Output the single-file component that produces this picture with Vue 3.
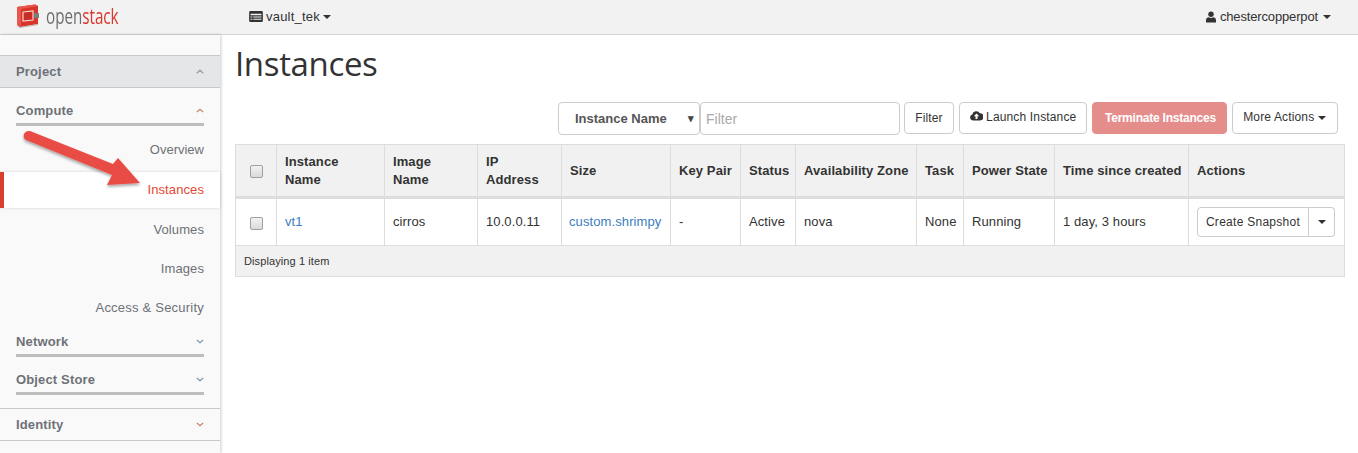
<script setup>
const headers = [
  { label: 'Instance Name', w: 108 },
  { label: 'Image Name', w: 93 },
  { label: 'IP Address', w: 84 },
  { label: 'Size', w: 109, one: true },
  { label: 'Key Pair', w: 70, one: true },
  { label: 'Status', w: 55, one: true },
  { label: 'Availability Zone', w: 121, one: true },
  { label: 'Task', w: 47, one: true },
  { label: 'Power State', w: 91, one: true },
  { label: 'Time since created', w: 134, one: true },
  { label: 'Actions', w: 156, one: true }
]
const cells = ['cirros', '10.0.0.11']
const tail = ['-', 'Active', 'nova', 'None', 'Running', '1 day, 3 hours']
</script>

<template>
  <div class="page">
    <header class="topbar">
      <div class="brand">
        <svg class="logo" width="26" height="24" viewBox="0 0 26 24">
          <path d="M2 3 L20 0.500 L23 2 L23 20 L5 23 L2 21 Z" fill="#d8342a" />
          <path d="M2 3 L20 0.500 L23 2 L6 5 L6 22 L2 21 Z" fill="#e8574c" />
          <path d="M8 8 L18 7 L18 16 L8 17 Z" fill="#c92e25" stroke="#f3d6d2" stroke-width="1.200" />
          <path d="M19 9 H24 V14 H19 Z" fill="#7d7d7d" />
          <path d="M1 22 L5 23 L23 20 L23 21 L5 24 Z" fill="#b9b2ae" />
        </svg>
        <span class="wordmark"><span class="open">open</span><span class="stack">stack</span></span>
      </div>
      <div class="project-pick">
        <svg width="14" height="11" viewBox="0 0 15 12"><path fill="#333" d="M0 1.500A1.500 1.500 0 0 1 1.500 0h12A1.500 1.500 0 0 1 15 1.500v9a1.500 1.500 0 0 1-1.500 1.500h-12A1.500 1.500 0 0 1 0 10.500zM1.500 3v1.500h12V3zm0 3v1h2V6zm3 0v1h9V6zm-3 2.500v1h2v-1zm3 0v1h9v-1z" fill-rule="evenodd"/></svg>
        <span class="pick-name">vault_tek</span>
        <i class="caret"></i>
      </div>
      <div class="user">
        <svg width="10" height="12" viewBox="0 0 11 12"><circle cx="5.500" cy="3" r="3" fill="#333"/><path fill="#333" d="M0 12V9.500C0 7.500 1.500 6.500 3 6.300c1.500 1 3.500 1 5 0 1.500.2 3 1.200 3 3.200V12z"/></svg>
        <span class="user-name">chestercopperpot</span>
        <i class="caret"></i>
      </div>
    </header>

    <div class="body">
      <aside class="sidebar">
        <div class="dash dash-active">
          <span>Project</span>
          <svg class="chev" viewBox="0 0 10 6"><path d="M1 5 L5 1.500 L9 5" /></svg>
        </div>
        <div class="group open-group">
          <span>Compute</span>
          <svg class="chev orange" viewBox="0 0 10 6"><path d="M1 5 L5 1.500 L9 5" /></svg>
        </div>
        <nav class="links">
          <a class="link l-overview">Overview</a>
          <a class="link active">Instances</a>
          <a class="link l-volumes">Volumes</a>
          <a class="link l-images">Images</a>
          <a class="link l-access">Access &amp; Security</a>
        </nav>
        <div class="group g-network">
          <span>Network</span>
          <svg class="chev blue" viewBox="0 0 10 6"><path d="M1 1 L5 4.500 L9 1" /></svg>
        </div>
        <div class="group g-store">
          <span>Object Store</span>
          <svg class="chev blue" viewBox="0 0 10 6"><path d="M1 1 L5 4.500 L9 1" /></svg>
        </div>
        <div class="dash dash-identity">
          <span>Identity</span>
          <svg class="chev orange" viewBox="0 0 10 6"><path d="M1 1 L5 4.500 L9 1" /></svg>
        </div>
      </aside>

      <main class="main">
        <h1 class="title">Instances</h1>
        <div class="actions">
          <div class="select">
            <span>Instance Name</span>
            <span class="tri">▾</span>
          </div>
          <input class="filter" placeholder="Filter" />
          <button class="btn b-filter">Filter</button>
          <button class="btn b-launch">
            <svg width="13" height="11" viewBox="0 0 13 11"><path fill="#333" fill-rule="evenodd" d="M3 10.500A3 3 0 0 1 2.300 4.600 4 4 0 0 1 9.800 3.300 3.600 3.600 0 0 1 10 10.500zM6.500 3.500 3.800 6.300H5.500V9h2V6.300h1.700z"/></svg>
            Launch Instance
          </button>
          <button class="btn danger">Terminate Instances</button>
          <button class="btn b-more">More Actions <i class="caret"></i></button>
        </div>

        <table class="table">
          <colgroup>
            <col style="width: 41px" />
            <col v-for="h in headers" :key="h.label" :style="{ width: h.w + 'px' }" />
          </colgroup>
          <thead>
            <tr>
              <th class="check"><span class="box"></span></th>
              <th v-for="h in headers" :key="h.label" :class="{ one: h.one }">{{ h.label }}</th>
            </tr>
          </thead>
          <tbody>
            <tr>
              <td class="check"><span class="box"></span></td>
              <td><a class="tlink">vt1</a></td>
              <td v-for="c in cells" :key="c">{{ c }}</td>
              <td><a class="tlink size-link">custom.shrimpy</a></td>
              <td v-for="c in tail" :key="c">{{ c }}</td>
              <td>
                <div class="split">
                  <span class="split-main">Create Snapshot</span>
                  <span class="split-caret"><i class="caret"></i></span>
                </div>
              </td>
            </tr>
          </tbody>
          <tfoot>
            <tr><td colspan="12">Displaying 1 item</td></tr>
          </tfoot>
        </table>
      </main>
    </div>

    <svg class="arrow" width="130" height="80" viewBox="0 0 130 80">
      <defs>
        <filter id="sh" x="-20%" y="-20%" width="140%" height="150%">
          <feDropShadow dx="0" dy="2" stdDeviation="1.500" flood-color="#000" flood-opacity="0.35" />
        </filter>
      </defs>
      <path filter="url(#sh)" fill="#e94c45" d="M8 2 L91 35 L96 29 L118 54 L85 56 L90 46 L4 11 C0 9 1 1 8 2 Z" />
    </svg>
  </div>
</template>

<style>
html, body { margin: 0; background: #fff; }
</style>

<style scoped>
.page {
  position: relative;
  width: 1358px;
  height: 453px;
  overflow: hidden;
  font-family: "Liberation Sans", Arial, sans-serif;
  font-size: 13px;
  color: #333;
  letter-spacing: 0.1px;
}
.topbar {
  height: 34px;
  background: #f2f2f2;
  border-bottom: 1px solid #d6d6d6;
  display: flex;
  align-items: center;
}
.brand { width: 249px; display: flex; align-items: center; padding-left: 15px; box-sizing: border-box; gap: 5px; }
.logo { flex: none; margin-top: -2px; }
.wordmark {
  font-family: "Open Sans", sans-serif;
  font-size: 22px;
  font-weight: 500;
  letter-spacing: 0;
  transform: scaleX(0.69);
  transform-origin: left center;
  line-height: 28px;
  margin-top: -5px;
}
.open { color: #6d6d6d; }
.stack { color: #d9372c; }
.project-pick { display: flex; align-items: center; gap: 3px; margin-top: -1px; }
.pick-name { letter-spacing: 0.2px; }
.user { margin-left: auto; margin-right: 27px; display: flex; align-items: center; gap: 4px; margin-top: -1px; }
.user-name { letter-spacing: -0.15px; }
.user .caret { margin-left: 1px; }
.caret {
  display: inline-block;
  width: 0;
  height: 0;
  border-top: 4px solid #333;
  border-left: 4px solid transparent;
  border-right: 4px solid transparent;
  vertical-align: middle;
}
.body { display: flex; height: 418px; }
.sidebar {
  width: 220px;
  flex: none;
  background: #f9f9f9;
  box-shadow: 1px 0 3px rgba(0, 0, 0, 0.2);
  padding-top: 20px;
  box-sizing: border-box;
  color: #6e7177;
  position: relative;
  letter-spacing: 0.15px;
}
.dash {
  height: 33px;
  padding: 0 16px;
  display: flex;
  align-items: center;
  justify-content: space-between;
  font-weight: 700;
  box-sizing: border-box;
  border-top: 1px solid #c8c8c8;
  border-bottom: 1px solid #c8c8c8;
}
.dash-active { background: #e4e6e8; }
.dash-identity { margin-top: 13px; }
.group {
  margin: 0 16px;
  display: flex;
  align-items: center;
  justify-content: space-between;
  font-weight: 700;
  box-sizing: border-box;
  border-bottom: 3px solid #bdbdbd;
}
.open-group { height: 38px; padding-top: 9px; }
.g-network { height: 31px; padding-top: 2px; }
.g-store { height: 38px; padding-top: 9px; }
.chev { width: 8px; height: 5px; fill: none; stroke: #7f8c99; stroke-width: 1.300; }
.chev.orange { stroke: #c0785a; }
.chev.blue { stroke: #6e8ba5; }
.links { display: flex; flex-direction: column; }
.link {
  height: 39px;
  line-height: 41px;
  text-align: right;
  padding-right: 16px;
  color: #6e7177;
  letter-spacing: 0.1px;
}
.l-overview { height: 46px; line-height: 48px; letter-spacing: 0; }
.link.active {
  height: 36px;
  line-height: 35px;
  background: #fff;
  color: #e4492f;
  border-left: 4px solid #d9402a;
  box-shadow: 0 0 3px rgba(0, 0, 0, 0.15);
  width: 220px;
  box-sizing: border-box;
  position: relative;
}
.l-volumes { height: 42px; line-height: 44px; }
.l-images { height: 37px; line-height: 37px; }
.l-access { letter-spacing: 0.22px; }
.main { flex: 1; padding: 0 13px 0 15px; min-width: 0; }
.title {
  margin: 0;
  height: 59px;
  font-family: "Open Sans", sans-serif;
  font-weight: 400;
  font-size: 33px;
  line-height: 58px;
  color: #333;
  letter-spacing: -0.35px;
}
.actions {
  display: flex;
  justify-content: flex-end;
  align-items: flex-start;
  margin: 8px 7px 0 0;
  height: 42px;
}
.select {
  width: 142px;
  height: 33px;
  border: 1px solid #ccc;
  border-radius: 4px;
  box-sizing: border-box;
  display: flex;
  align-items: center;
  justify-content: space-between;
  padding: 0 5px 0 16px;
  font-weight: 700;
  color: #555;
  letter-spacing: 0;
}
.tri { font-size: 11px; color: #444; }
.filter {
  width: 200px;
  height: 33px;
  border: 1px solid #ccc;
  border-radius: 4px;
  box-sizing: border-box;
  padding: 0 5px;
  font: inherit;
  font-size: 14px;
  letter-spacing: 0;
  outline: none;
}
.filter::placeholder { color: #aaa; }
.btn {
  height: 32px;
  margin-left: 5px;
  padding: 0 10px;
  border: 1px solid #ccc;
  border-radius: 4px;
  background: #fff;
  font: inherit;
  font-size: 12px;
  color: #333;
  letter-spacing: 0.15px;
}
.b-filter { margin-left: 4px; width: 50px; padding: 0; }
.b-launch { width: 128px; padding: 0 0 2px; }
.danger {
  width: 135px;
  padding: 0 0 0 2px;
  background: #e58d8b;
  border-color: #e58d8b;
  color: #fff;
  font-weight: 700;
  letter-spacing: -0.22px;
}
.b-more { width: 106px; padding: 0 1px 2px 0; }
.table {
  width: 1109px;
  table-layout: fixed;
  border-collapse: collapse;
  background: #fff;
}
th, td {
  border: 1px solid #ddd;
  padding: 8px;
  text-align: left;
  box-sizing: border-box;
}
th {
  background: #f1f1f1;
  height: 53px;
  border-bottom: 3px solid #ddd;
  font-weight: 700;
  line-height: 18px;
  vertical-align: middle;
  padding-top: 7px;
  padding-bottom: 7px;
}
th.one { white-space: nowrap; }
tbody td { height: 46px; vertical-align: middle; padding-top: 6px; padding-bottom: 8px; }
tfoot td { background: #f1f1f1; height: 31px; font-size: 11px; padding: 0 8px; }
.check { text-align: center; padding: 0; }
.box {
  display: inline-block;
  width: 11px;
  height: 11px;
  border: 1px solid #a0a0a0;
  border-radius: 2px;
  background: linear-gradient(#f2f2f2, #dadada);
  vertical-align: middle;
}
tbody .box { margin-top: 1px; }
.tlink { color: #3c7ebd; }
.size-link { margin-left: -1px; }
.split { display: flex; height: 30px; width: 138px; margin-top: 2px; }
.split-main {
  flex: 1;
  border: 1px solid #ccc;
  border-radius: 4px 0 0 4px;
  font-size: 12px;
  line-height: 28px;
  text-align: center;
  letter-spacing: 0.27px;
}
.split-caret {
  width: 25px;
  border: 1px solid #ccc;
  border-left: 0;
  border-radius: 0 4px 4px 0;
  display: flex;
  align-items: center;
  justify-content: center;
}
.arrow { position: absolute; left: 22px; top: 129px; pointer-events: none; }
</style>
